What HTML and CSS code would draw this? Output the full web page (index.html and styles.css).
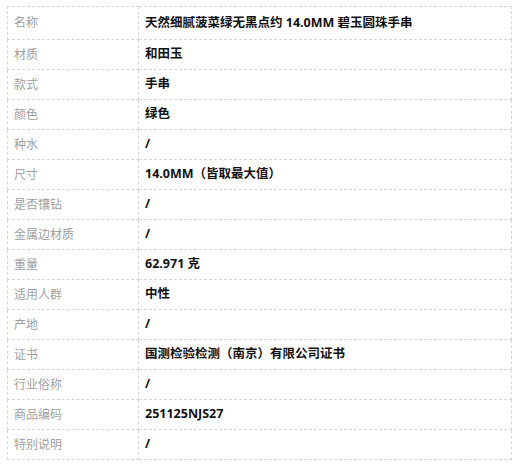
FILE: index.html
```html
<!DOCTYPE html>
<html lang="zh-CN">
<head>
<meta charset="utf-8">
<link rel="stylesheet" href="styles.css">
</head>
<body>
<table class="spec">
  <tbody>
    <tr class="first"><td class="k">名称</td><td class="v">天然细腻菠菜绿无黑点约 14.0MM 碧玉圆珠手串</td></tr>
    <tr><td class="k">材质</td><td class="v">和田玉</td></tr>
    <tr><td class="k">款式</td><td class="v">手串</td></tr>
    <tr><td class="k">颜色</td><td class="v">绿色</td></tr>
    <tr><td class="k">种水</td><td class="v">/</td></tr>
    <tr><td class="k">尺寸</td><td class="v">14.0MM（皆取最大值）</td></tr>
    <tr><td class="k">是否镶钻</td><td class="v">/</td></tr>
    <tr><td class="k">金属边材质</td><td class="v">/</td></tr>
    <tr><td class="k">重量</td><td class="v">62.971 克</td></tr>
    <tr><td class="k">适用人群</td><td class="v">中性</td></tr>
    <tr><td class="k">产地</td><td class="v">/</td></tr>
    <tr><td class="k">证书</td><td class="v">国测检验检测（南京）有限公司证书</td></tr>
    <tr><td class="k">行业俗称</td><td class="v">/</td></tr>
    <tr><td class="k">商品编码</td><td class="v">251125NJS27</td></tr>
    <tr><td class="k">特别说明</td><td class="v">/</td></tr>
  </tbody>
</table>
</body>
</html>
```
FILE: styles.css
```css
html, body {
  margin: 0;
  background: #ffffff;
}
body {
  padding: 6px 8px 0 7px;
  font-family: "Open Sans", "Noto Sans CJK SC", sans-serif;
}
.spec {
  width: 505px;
  border-collapse: collapse;
  table-layout: fixed;
}
.spec td {
  border: 1px dashed #d6d6d6;
  height: 29px;
  padding: 0;
  vertical-align: middle;
  line-height: 1;
}
.spec tr.first td {
  height: 32px;
}
.spec .k {
  width: 131px;
  padding-left: 6px;
  font-size: 12px;
  color: #a0a0a0;
  box-sizing: border-box;
}
.spec .v {
  padding-left: 6px;
  font-size: 12.5px;
  font-weight: 700;
  color: #111111;
}
```
